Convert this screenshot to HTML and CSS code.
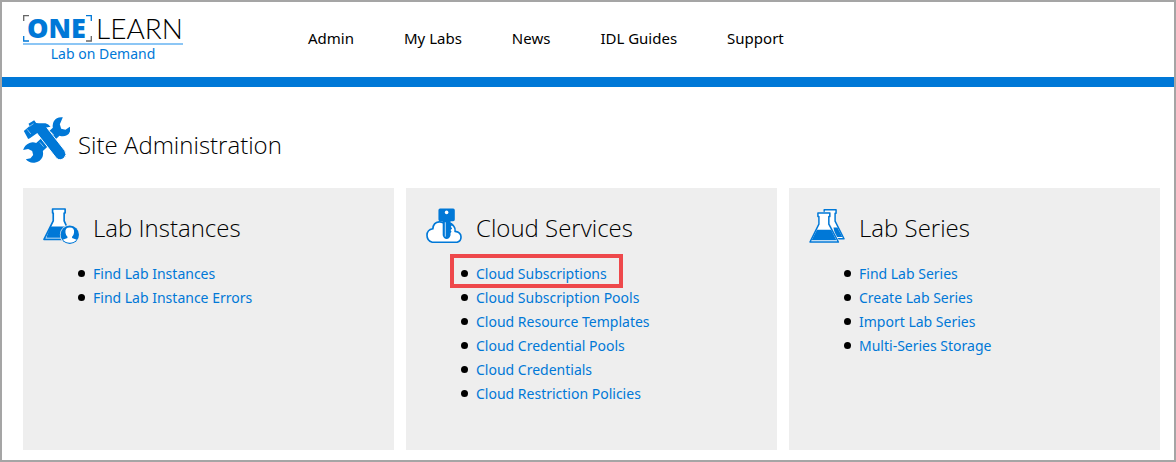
FILE: index.html
```html
<!DOCTYPE html>
<html lang="en">
<head>
<meta charset="utf-8">
<title>Site Administration</title>
<link rel="stylesheet" href="styles.css">
</head>
<body>
<div class="page">
  <header class="header">
    <a class="logo" href="#">
      <span class="logo-top">
        <span class="logo-one">ONE
          <svg class="logo-frame" viewBox="0 0 70 27" width="70" height="27" aria-hidden="true">
            <g fill="none" stroke-width="1.3">
              <path d="M.7 6V.7H6M63 26h5.300v-5" stroke="#666"/>
              <path d="M.7 21v5H6M63 .7h5.300V6" stroke="#0078d7"/>
            </g>
          </svg>
        </span>
        <span class="logo-learn">LEARN</span>
      </span>
      <span class="logo-sub">Lab on Demand</span>
    </a>
    <nav class="nav">
      <a href="#">Admin</a><a href="#">My Labs</a><a href="#">News</a><a href="#">IDL Guides</a><a href="#">Support</a>
    </nav>
  </header>
  <main class="main">
    <div class="title">
      <svg viewBox="9 8 140 138" width="47" height="46" aria-hidden="true">
        <g fill="#0078d7">
          <path d="M128 9q-19-2-27 12-5 9-3 19L48 86q-10-4-20 0-15 6-19 21l15-3 12 6 3 12-8 10-14 3q10 12 26 10 17-2 24-17 3-9 1-18l50-46q12 4 22-1 14-8 9-26l-13 9-13-3-4-13z"/>
          <path d="M48 54l26-22 60 77q8 12-2 22-12 10-23 1z" stroke="#fff" stroke-width="3"/>
          <path d="M11 50l14-12 3-4-3-6 17-10 6 8 8 1h20q9 2 15 10l-17 3-45 32-5 2z"/>
        </g>
        <path d="M27 37l13-9M21 45l11 14M59 84l11 13M92 52l9 10" fill="none" stroke="#fff" stroke-width="1.500"/>
      </svg>
      <h1>Site Administration</h1>
    </div>
    <div class="cards">
      <section class="card">
        <div class="card-head">
          <svg viewBox="38 38 109 109" width="36" height="36" aria-hidden="true">
            <path d="M67 41h38v12h-3v24l25 56H41l28-56V53h-2z" fill="#fff" stroke="#0078d7" stroke-width="5" stroke-linejoin="round"/>
            <path d="M60 94h46l15 34H48z" fill="#0078d7"/>
            <circle cx="119" cy="119" r="30" fill="#eee"/><circle cx="119" cy="119" r="28" fill="#0078d7"/>
            <path d="M119 97q15 0 13 16-1 8-6 12v4l14 5q-8 9-21 9t-21-9l14-5v-4q-5-4-6-12-2-16 13-16z" fill="#fff"/>
          </svg>
          <h2>Lab Instances</h2>
        </div>
        <ul>
          <li><a href="#">Find Lab Instances</a></li>
          <li><a href="#">Find Lab Instance Errors</a></li>
        </ul>
      </section>
      <section class="card">
        <div class="card-head">
          <svg viewBox="32 41 110 109" width="36" height="36" aria-hidden="true">
            <path d="M51 145q-16-4-16-21 0-17 18-20 1-19 19-21 10-1 18 6 17-7 27 7 5 6 4 16 18 3 18 17 0 13-12 16z" fill="#fff" stroke="#0078d7" stroke-width="5"/>
            <path d="M75 42h40q5 0 5 5v29q0 5-5 5h-8v7l5 4-4 6 4 5-5 5 3 5-3 4v7q-3 11-12 11t-12-11V81h-8q-5 0-5-5V47q0-5 5-5z" fill="#0078d7"/>
            <circle cx="95" cy="54" r="5.500" fill="#fff"/><path d="M91 84v44" stroke="#bfe0fa" stroke-width="3"/>
          </svg>
          <h2>Cloud Services</h2>
        </div>
        <ul>
          <li class="highlight"><a href="#">Cloud Subscriptions</a></li>
          <li><a href="#">Cloud Subscription Pools</a></li>
          <li><a href="#">Cloud Resource Templates</a></li>
          <li><a href="#">Cloud Credential Pools</a></li>
          <li><a href="#">Cloud Credentials</a></li>
          <li><a href="#">Cloud Restriction Policies</a></li>
        </ul>
      </section>
      <section class="card">
        <div class="card-head">
          <svg viewBox="8 8 109 105" width="36" height="36" aria-hidden="true">
            <g stroke="#0078d7" stroke-width="4.500" stroke-linejoin="round" fill="#fff">
              <path d="M54 11h36v11h-3v24l27 53H56V22h-2z"/>
              <path d="M82 65h12l15 29H88z" fill="#0078d7" stroke="none"/>
              <path d="M35 21h36v11h-3v23l29 54H11l27-54V32h-3z" stroke="#eee" stroke-width="8"/>
              <path d="M35 21h36v11h-3v23l29 54H11l27-54V32h-3z"/>
            </g>
            <path d="M32 72h43l16 32H16z" fill="#0078d7"/>
          </svg>
          <h2>Lab Series</h2>
        </div>
        <ul>
          <li><a href="#">Find Lab Series</a></li>
          <li><a href="#">Create Lab Series</a></li>
          <li><a href="#">Import Lab Series</a></li>
          <li><a href="#">Multi-Series Storage</a></li>
        </ul>
      </section>
    </div>
  </main>
</div>
</body>
</html>
```
FILE: styles.css
```css
*, *::before, *::after { box-sizing: border-box; }
body { margin: 0; background: #fff; color: #000; font-family: "Noto Sans", "Open Sans", sans-serif; font-size: 14px; }
a { color: #0078d7; text-decoration: none; }
h1, h2 { margin: 0; font-family: "Open Sans", "Noto Sans", sans-serif; font-weight: 300; font-size: 24px; line-height: 36px; }
svg { display: block; flex: none; }
.page { min-height: 100vh; border: 2px solid #a5a5a5; }
.header { display: flex; align-items: flex-start; gap: 125px; padding: 12px 21px 15px; border-bottom: 10px solid #0078d7; }
.logo { width: 160px; height: 48px; }
.logo-top { display: flex; height: 31px; border-bottom: 2px solid #8cc6f5; line-height: 28px; white-space: nowrap; }
.logo-one { position: relative; width: 73px; padding-left: 4px; font-family: "Open Sans", sans-serif; font-size: 27px; font-weight: 800; }
.logo-frame { position: absolute; left: 0; top: 1px; }
.logo-learn { font-family: Lato, sans-serif; font-size: 28px; font-weight: 300; color: #000; }
.logo-sub { display: block; line-height: 17px; text-align: center; }
.nav { display: flex; gap: 50px; padding-top: 12px; font-size: 15px; line-height: 24px; }
.nav a { color: #000; }
.main { padding: 30px 14px 10px 21px; }
.title { display: flex; align-items: flex-start; gap: 8px; }
.title h1 { padding-top: 10px; }
.cards { display: grid; grid-template-columns: repeat(3, 1fr); gap: 12px; margin-top: 25px; }
.card { min-height: 262px; padding: 20px; background: #eee; }
.card-head { display: flex; align-items: flex-start; gap: 14px; }
.card-head h2 { padding-top: 2px; }
.card ul { margin: 16px 0 0; padding: 0 0 0 50px; list-style: none; line-height: 24px; }
.card li { position: relative; }
.card li::before { content: ""; position: absolute; left: -15px; top: 8px; width: 7px; height: 7px; border-radius: 50%; background: #000; }
.card .highlight::after { content: ""; position: absolute; left: -26px; top: -8px; width: 173px; height: 34px; border: 4px solid #ee484b; pointer-events: none; }
```
